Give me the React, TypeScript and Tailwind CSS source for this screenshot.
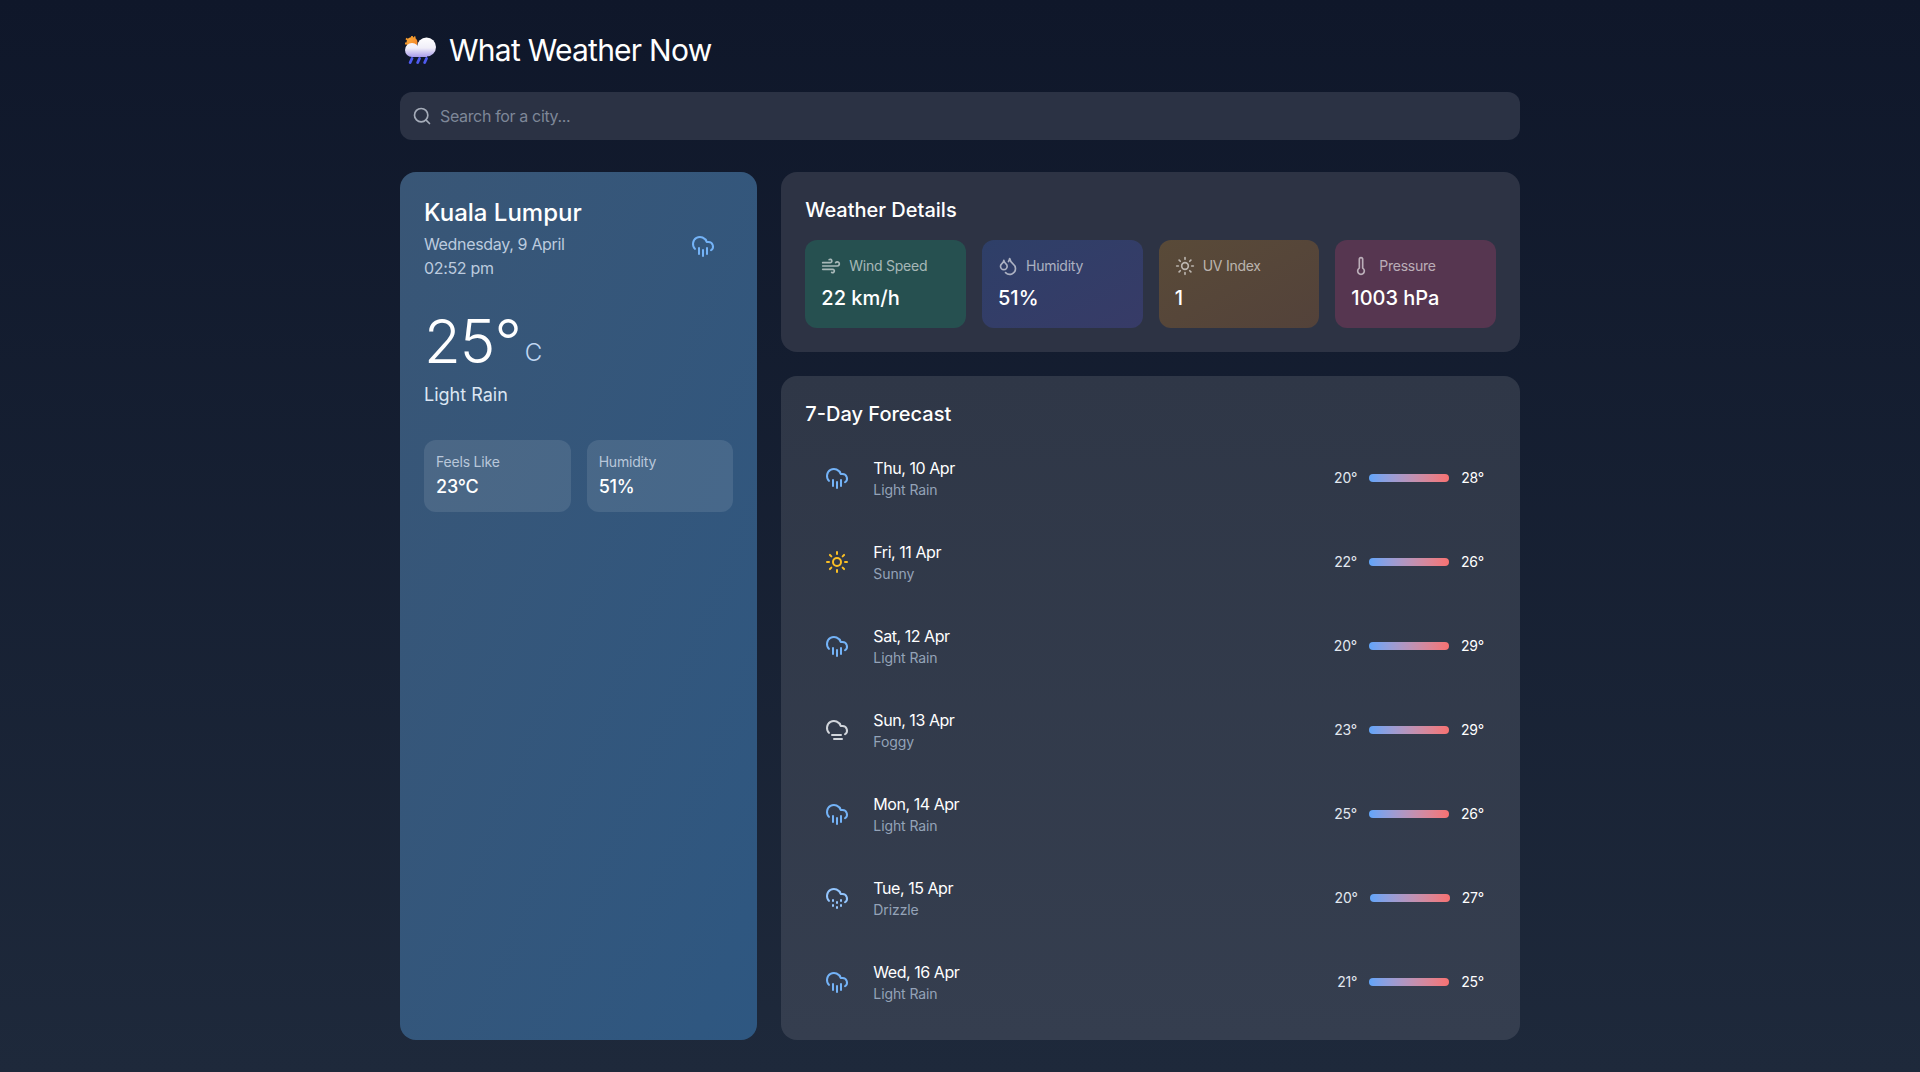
import React from "react";
import { Search, CloudRain, Sun, CloudFog, CloudDrizzle, Wind, Droplets, Thermometer } from "lucide-react";

const days = [
  { d: "Thu, 10 Apr", c: "Light Rain", l: "20°", h: "28°", i: "rain" },
  { d: "Fri, 11 Apr", c: "Sunny", l: "22°", h: "26°", i: "sun" },
  { d: "Sat, 12 Apr", c: "Light Rain", l: "20°", h: "29°", i: "rain" },
  { d: "Sun, 13 Apr", c: "Foggy", l: "23°", h: "29°", i: "fog" },
  { d: "Mon, 14 Apr", c: "Light Rain", l: "25°", h: "26°", i: "rain" },
  { d: "Tue, 15 Apr", c: "Drizzle", l: "20°", h: "27°", i: "drizzle" },
  { d: "Wed, 16 Apr", c: "Light Rain", l: "21°", h: "25°", i: "rain" },
];

function DayIcon({ i }: { i: string }) {
  if (i === "sun") return <Sun className="w-6 h-6 text-[#fbbf24]" strokeWidth={2} />;
  if (i === "fog") return <CloudFog className="w-6 h-6 text-[#d1d5db]" strokeWidth={2} />;
  if (i === "drizzle") return <CloudDrizzle className="w-6 h-6 text-[#93c5fd]" strokeWidth={2} />;
  return <CloudRain className="w-6 h-6 text-[#74b3f7]" strokeWidth={2} />;
}

function Logo() {
  return (
    <svg width="32" height="28" viewBox="0 0 32 28" className="shrink-0">
      <defs>
        <linearGradient id="cl" gradientUnits="userSpaceOnUse" x1="0" y1="1" x2="0" y2="21">
          <stop offset="0" stopColor="#ffffff" />
          <stop offset="0.55" stopColor="#f0eef8" />
          <stop offset="1" stopColor="#a99ceb" />
        </linearGradient>
        <linearGradient id="sn" x1="0" y1="0" x2="1" y2="1">
          <stop offset="0" stopColor="#fbb040" />
          <stop offset="1" stopColor="#f47b20" />
        </linearGradient>
      </defs>
      <circle cx="7" cy="6.500" r="5.500" fill="url(#sn)" />
      <path d="M7 0v3M1 2.500l2 1.500M0 7.500h3M10 0.500l-.8 2M1.500 11.500l2-1" stroke="#f59a2c" strokeWidth="1.800" />
      <g fill="url(#cl)">
        <circle cx="7" cy="14" r="7" />
        <circle cx="21.500" cy="11" r="9.500" />
        <rect x="7" y="12" width="15" height="9" />
      </g>
      <path d="M7 22.500l-1.800 4M14.500 22.500l-1.800 4M21.500 22.500l-1.800 4" stroke="#4f5bf0" strokeWidth="2.800" strokeLinecap="round" />
    </svg>
  );
}

function Detail({ icon, label, value, bg }: { icon: React.ReactNode; label: string; value: string; bg: string }) {
  return (
    <div className={`rounded-xl p-4 h-[88px] ${bg}`}>
      <div className="flex items-center gap-2 text-[14px] leading-5 tracking-[-0.25px] text-white/60">
        {icon}
        <span>{label}</span>
      </div>
      <div className="mt-2 text-[20px] leading-7 font-medium text-white">{value}</div>
    </div>
  );
}

export default function App() {
  return (
    <div className="min-h-[1072px] bg-gradient-to-b from-[#0f172a] to-[#1e293b] text-white font-['Inter',sans-serif]">
      <div className="w-[1120px] mx-auto pt-6 pb-8">
        <div className="flex items-center gap-3 h-[52px] pl-[5px]">
          <Logo />
          <h1 className="text-[30px] leading-9 font-normal tracking-[-0.75px]">What Weather Now</h1>
        </div>
        <div className="mt-4 h-12 rounded-xl bg-[#2b3244] flex items-center gap-2 px-3 text-[16px] tracking-[-0.35px] text-[#7e8798]">
          <Search className="w-5 h-5 text-[#a5acb9]" strokeWidth={2} />
          <span>Search for a city...</span>
        </div>
        <div className="mt-8 grid grid-cols-3 gap-6 h-[868px]">
          <div className="rounded-2xl p-6 bg-gradient-to-br from-[#395676] to-[#2e5781]">
            <div className="flex items-center justify-between">
              <div>
                <div className="pt-px text-[24px] leading-8 font-medium">Kuala Lumpur</div>
                <div className="mt-[3px] text-[16px] leading-6 tracking-[-0.33px] text-[#bccbdf]">Wednesday, 9 April</div>
                <div className="text-[16px] leading-6 tracking-[-0.33px] text-[#bccbdf]">02:52 pm</div>
              </div>
              <CloudRain className="w-6 h-6 mr-[18px] mt-4 text-[#74b3f7]" strokeWidth={2} />
            </div>
            <div className="mt-[31px] flex items-end">
              <span className="text-[60px] leading-[60px] font-light tracking-[-1px]">25°</span>
              <span className="ml-1 mb-[2px] text-[24px] leading-8 font-light text-[#bfd6f2]">C</span>
            </div>
            <div className="mt-[10px] text-[18px] leading-7 text-[#dbe6f3]">Light Rain</div>
            <div className="mt-[31px] grid grid-cols-2 gap-4">
              <div className="rounded-xl bg-white/10 p-3 h-[72px]">
                <div className="text-[14px] leading-5 tracking-[-0.2px] text-[#b9c7da]">Feels Like</div>
                <div className="mt-px text-[18px] leading-7 font-medium tracking-[-0.2px]">23°C</div>
              </div>
              <div className="rounded-xl bg-white/10 p-3 h-[72px]">
                <div className="text-[14px] leading-5 tracking-[-0.2px] text-[#b9c7da]">Humidity</div>
                <div className="mt-px text-[18px] leading-7 font-medium tracking-[-0.2px]">51%</div>
              </div>
            </div>
          </div>
          <div className="col-span-2 flex flex-col gap-6">
            <div className="rounded-2xl bg-[#2d3344] p-6 h-[180px]">
              <h2 className="text-[20px] leading-7 font-medium">Weather Details</h2>
              <div className="mt-4 grid grid-cols-4 gap-4">
                <Detail bg="bg-[#265050]" label="Wind Speed" value="22 km/h" icon={<Wind className="w-5 h-5" />} />
                <Detail bg="bg-gradient-to-br from-[#2e3f68] to-[#373b67]" label="Humidity" value="51%" icon={<Droplets className="w-5 h-5" />} />
                <Detail bg="bg-gradient-to-br from-[#594a38] to-[#53423a]" label="UV Index" value="1" icon={<Sun className="w-5 h-5" />} />
                <Detail bg="bg-[#563650]" label="Pressure" value="1003 hPa" icon={<Thermometer className="w-5 h-5" />} />
              </div>
            </div>
            <div className="flex-1 rounded-2xl bg-gradient-to-b from-[#2f3747] to-[#353e4f] p-6">
              <h2 className="text-[20px] leading-7 font-medium">7-Day Forecast</h2>
              <div className="mt-4 flex flex-col gap-4">
                {days.map((x) => (
                  <div key={x.d} className="h-[68px] px-3 flex items-center justify-between">
                    <div className="flex items-center gap-4">
                      <div className="w-10 flex justify-center"><DayIcon i={x.i} /></div>
                      <div>
                        <div className="text-[16px] leading-6 tracking-[-0.45px]">{x.d}</div>
                        <div className="text-[14px] leading-5 tracking-[-0.1px] text-[#94a3b8]">{x.c}</div>
                      </div>
                    </div>
                    <div className="flex items-center gap-3 text-[14px] leading-5 tracking-[-0.2px]">
                      <span className="text-[#e2e8f0]">{x.l}</span>
                      <div className="w-20 h-2 rounded-full bg-gradient-to-r from-[#60a5fa] to-[#f87171]" />
                      <span>{x.h}</span>
                    </div>
                  </div>
                ))}
              </div>
            </div>
          </div>
        </div>
      </div>
    </div>
  );
}
